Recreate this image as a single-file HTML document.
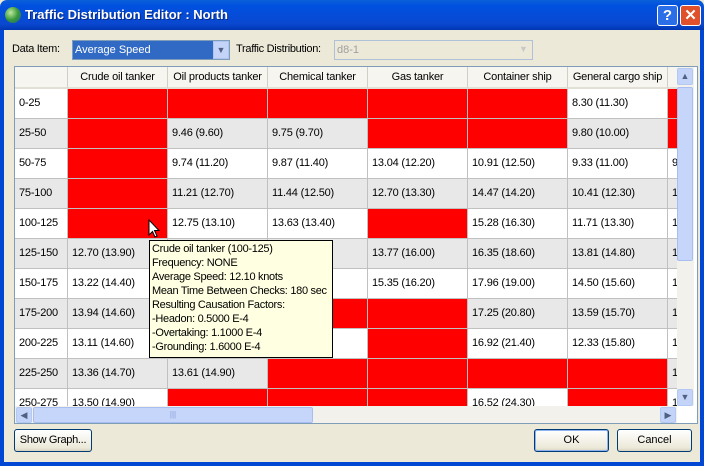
<!DOCTYPE html>
<html><head><style>
*{box-sizing:border-box;margin:0;padding:0}
body{width:704px;height:466px;overflow:hidden;background:#ece9d8;font-family:"Liberation Sans",sans-serif;font-size:11px;color:#000;position:relative}
.abs{position:absolute}
.c{position:absolute;height:30px;width:100px;border-right:1px solid #c0c0c0;border-bottom:1px solid #c0c0c0;padding:0 0 0 4px;line-height:29px;white-space:nowrap;overflow:hidden}
.r{background:#ff0000}
.g{background:#e8e8e8}
.w{background:#fff}
.h{position:absolute;top:0;height:22px;line-height:21px;text-align:center;border-right:1px solid #d0cfc4;background:#f6f5f0;border-bottom:2px solid #e2e0d6;white-space:nowrap;overflow:hidden}
.btn{position:absolute;border:1px solid #003c74;border-radius:3px;background:linear-gradient(#fff,#ece9d8 85%,#d6d0c0);text-align:center;line-height:21px;height:23px}
</style></head><body>
<div class="abs" style="left:0;top:0;width:704px;height:30px;background:linear-gradient(#0a5fd8,#0050e0 20%,#0a48d0 80%,#0035b0);border-radius:7px 7px 0 0"></div>
<div class="abs" style="left:0;top:30px;width:4px;height:436px;background:#0047d4"></div>
<div class="abs" style="right:0;top:30px;width:4px;height:436px;background:#0047d4"></div>
<div class="abs" style="left:0;bottom:0;width:704px;height:4px;background:#0047d4"></div>
<div class="abs" style="left:5px;top:7px;width:16px;height:16px;border-radius:50%;background:radial-gradient(circle at 35% 35%,#bfe8a0,#3a9a3a 50%,#1c5a8a)"></div>
<div class="abs" style="left:25px;top:7px;color:#fff;font-weight:bold;font-size:13px;text-shadow:1px 1px #0a2a80">Traffic Distribution Editor : North</div>
<div class="abs" style="left:657px;top:5px;width:21px;height:21px;border:1px solid #fff;border-radius:3px;background:#2a6fe8;color:#fff;font-weight:bold;font-size:15px;text-align:center;line-height:19px">?</div>
<div class="abs" style="left:680px;top:5px;width:21px;height:21px;border:1px solid #fff;border-radius:3px;background:#e0502a;color:#fff;font-weight:bold;font-size:15px;text-align:center;line-height:19px">✕</div>

<div class="abs" style="left:12px;top:43px;letter-spacing:-0.3px">Data Item:</div>
<div class="abs" style="left:72px;top:40px;width:158px;height:20px;border:1px solid #7f9db9;background:#316ac5;color:#fff;padding-left:2px;line-height:18px">Average Speed</div>
<div class="abs" style="left:213px;top:41px;width:16px;height:18px;background:#c4d4f8;border:1px solid #b0c4f0;color:#4d6185;text-align:center;font-size:9px;line-height:17px">▼</div>
<div class="abs" style="left:236px;top:43px;letter-spacing:-0.3px">Traffic Distribution:</div>
<div class="abs" style="left:334px;top:40px;width:199px;height:20px;border:1px solid #afc1d6;background:#ece9d8;color:#a0a0a0;padding-left:2px;line-height:18px">d8-1</div>
<div class="abs" style="left:515px;top:41px;width:17px;height:18px;color:#c8c8c8;text-align:center;font-size:9px;line-height:17px">▼</div>

<div class="abs" style="left:14px;top:66px;width:684px;height:358px;border:1px solid #7f9db9;background:#fff;overflow:hidden">
<div class="abs" style="left:0;top:0;width:662px;height:339px;overflow:hidden;letter-spacing:-0.2px">
<div class="h" style="left:0;width:53px"></div>
<div class="h" style="left:53px;width:100px">Crude oil tanker</div>
<div class="h" style="left:153px;width:100px">Oil products tanker</div>
<div class="h" style="left:253px;width:100px">Chemical tanker</div>
<div class="h" style="left:353px;width:100px">Gas tanker</div>
<div class="h" style="left:453px;width:100px">Container ship</div>
<div class="h" style="left:553px;width:100px">General cargo ship</div>
<div class="h" style="left:653px;width:20px"></div>
<div id="g"></div>
</div>
<div class="abs" style="left:662px;top:0;width:17px;height:339px;background:#f3f1ec"></div>
<div class="abs" style="left:662px;top:1px;width:16px;height:17px;background:#c4d4f8;border:1px solid #b4c8f4;border-radius:2px;color:#4d6185;font-size:9px;text-align:center;line-height:15px">▲</div>
<div class="abs" style="left:662px;top:20px;width:16px;height:174px;background:#c6d6fa;border:1px solid #a8bef0;border-radius:2px"></div>
<div class="abs" style="left:662px;top:322px;width:16px;height:17px;background:#c4d4f8;border:1px solid #b4c8f4;border-radius:2px;color:#4d6185;font-size:9px;text-align:center;line-height:15px">▼</div>
<div class="abs" style="left:0;top:339px;width:662px;height:17px;background:#f3f1ec"></div>
<div class="abs" style="left:1px;top:340px;width:16px;height:16px;background:#c4d4f8;border:1px solid #b4c8f4;border-radius:2px;color:#4d6185;font-size:9px;text-align:center;line-height:14px">◀</div>
<div class="abs" style="left:18px;top:340px;width:280px;height:16px;background:#c6d6fa;border:1px solid #a8bef0;border-radius:2px;color:#8aa0d8;text-align:center;line-height:13px;font-size:8px">|||</div>
<div class="abs" style="left:645px;top:340px;width:16px;height:16px;background:#c4d4f8;border:1px solid #b4c8f4;border-radius:2px;color:#4d6185;font-size:9px;text-align:center;line-height:14px">▶</div>
</div>

<div class="abs" style="left:149px;top:240px;width:184px;height:118px;border:1px solid #000;background:#ffffe1;padding:1px 2px;line-height:14px;font-size:11px;letter-spacing:-0.3px;white-space:nowrap;overflow:hidden">Crude oil tanker (100-125)<br>Frequency: NONE<br>Average Speed: 12.10 knots<br>Mean Time Between Checks: 180 sec<br>Resulting Causation Factors:<br>-Headon: 0.5000 E-4<br>-Overtaking: 1.1000 E-4<br>-Grounding: 1.6000 E-4</div>
<svg class="abs" style="left:148px;top:219px" width="12" height="19"><path d="M1 1 L1 16 L4.5 12.5 L7 18 L9 17 L6.5 11.5 L11 11.5 Z" fill="#fff" stroke="#000" stroke-width="1"/></svg>

<div class="btn" style="left:14px;top:429px;width:78px;letter-spacing:-0.3px">Show Graph...</div>
<div class="btn" style="left:534px;top:429px;width:75px;border-color:#003c74;box-shadow:inset 0 0 0 1px #8fb2f0">OK</div>
<div class="btn" style="left:617px;top:429px;width:75px">Cancel</div>

<script>
var rows=[
["0-25","R","R","R","R","R","8.30 (11.30)","R"],
["25-50","R","9.46 (9.60)","9.75 (9.70)","R","R","9.80 (10.00)","R"],
["50-75","R","9.74 (11.20)","9.87 (11.40)","13.04 (12.20)","10.91 (12.50)","9.33 (11.00)","9"],
["75-100","R","11.21 (12.70)","11.44 (12.50)","12.70 (13.30)","14.47 (14.20)","10.41 (12.30)","1"],
["100-125","R","12.75 (13.10)","13.63 (13.40)","R","15.28 (16.30)","11.71 (13.30)","1"],
["125-150","12.70 (13.90)","","","13.77 (16.00)","16.35 (18.60)","13.81 (14.80)","1"],
["150-175","13.22 (14.40)","","","15.35 (16.20)","17.96 (19.00)","14.50 (15.60)","1"],
["175-200","13.94 (14.60)","","R","R","17.25 (20.80)","13.59 (15.70)","1"],
["200-225","13.11 (14.60)","","","R","16.92 (21.40)","12.33 (15.80)","1"],
["225-250","13.36 (14.70)","13.61 (14.90)","R","R","R","R","1"],
["250-275","13.50 (14.90)","R","R","R","16.52 (24.30)","R","1"]];
var h="";
rows.forEach(function(r,i){
 var top=22+i*30, bg=i%2?"g":"w";
 h+='<div class="c '+bg+'" style="left:0;top:'+top+'px;width:53px">'+r[0]+'</div>';
 for(var j=1;j<8;j++){
  var v=r[j],cls=v=="R"?"r":bg;
  h+='<div class="c '+cls+'" style="left:'+(53+(j-1)*100)+'px;top:'+top+'px">'+(v=="R"?"":v)+'</div>';
 }
});
document.getElementById("g").innerHTML=h;
</script>
</body></html>
